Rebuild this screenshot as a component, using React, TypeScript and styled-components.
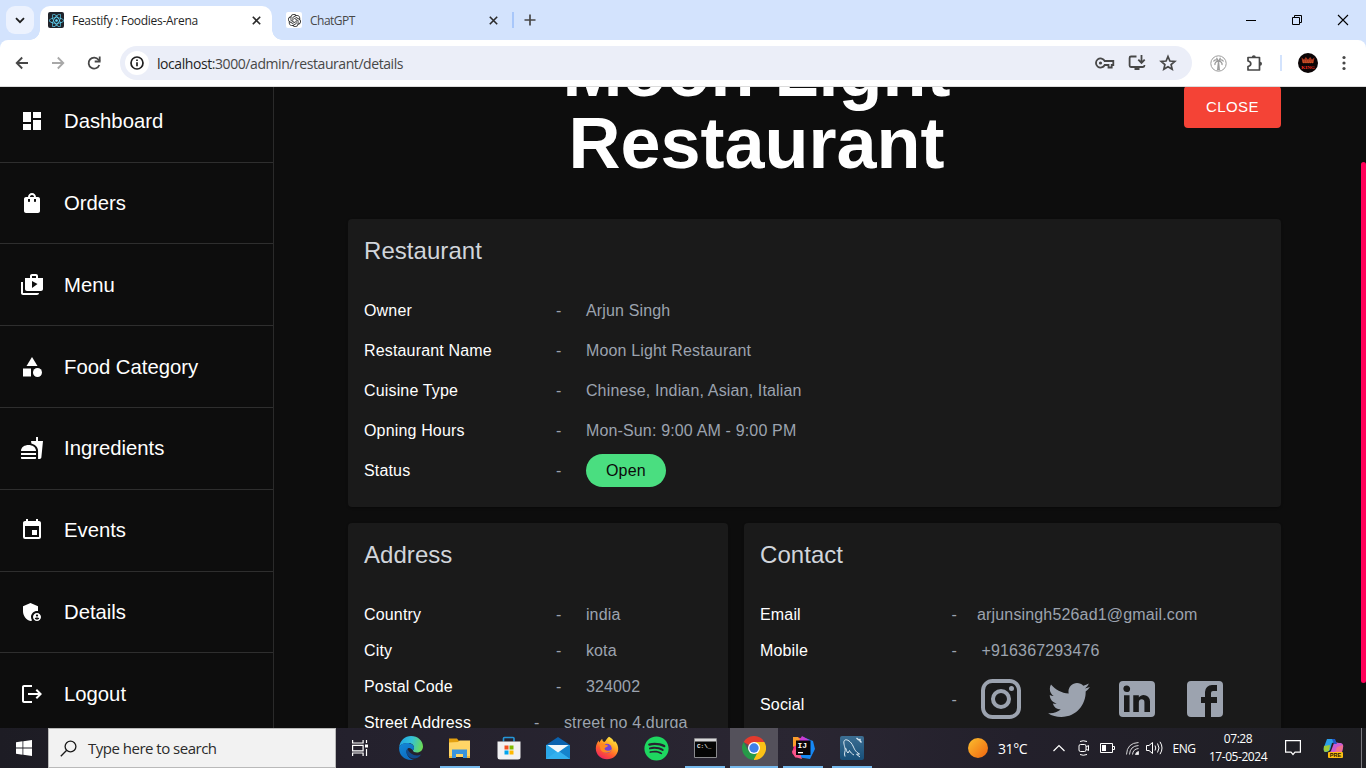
import React from "react";
import styled, { createGlobalStyle } from "styled-components";
import {
  MdAdminPanelSettings,
  MdCategory,
  MdDashboard,
  MdEvent,
  MdFastfood,
  MdLogout,
  MdShoppingBag,
  MdShopTwo,
} from "react-icons/md";
import { SiOpenai } from "react-icons/si";
import { FaReact, FaSpotify } from "react-icons/fa";

const GlobalStyle = createGlobalStyle`
  * { box-sizing: border-box; }
  body { margin: 0; overflow: hidden; background: #0d0d0d; }
  h1, h2, p { margin: 0; font-weight: 400; }
  svg { display: block; flex: none; }
`;

const uiFont = `"Open Sans", "Noto Sans", sans-serif`;
const pageFont = `"Liberation Sans", Arial, sans-serif`;

const Screen = styled.div`
  width: 1366px;
  height: 768px;
  display: flex;
  flex-direction: column;
  overflow: hidden;
`;

/* ---------- Browser ---------- */

const TabStrip = styled.div`
  flex: none;
  height: 40px;
  background: #d3e3fd;
  display: flex;
  font-family: ${uiFont};
`;

const TabSearch = styled.div`
  width: 28px;
  height: 28px;
  margin: 6px 6px 0;
  border-radius: 9px;
  background: #ecf2fe;
  display: flex;
  align-items: center;
  justify-content: center;
`;

const Tab = styled.div<{ $active?: boolean }>`
  position: relative;
  width: ${(p) => (p.$active ? 232 : 240)}px;
  height: 34px;
  margin-top: 6px;
  padding: 0 ${(p) => (p.$active ? 11 : 14)}px 6px ${(p) => (p.$active ? 8 : 14)}px;
  display: flex;
  align-items: center;
  gap: 8px;
  border-radius: 10px 10px 0 0;
  background: ${(p) => (p.$active ? "#fff" : "transparent")};
  font-size: 12px;
  color: ${(p) => (p.$active ? "#1f1f1f" : "#474747")};

  &::before,
  &::after {
    content: "";
    display: ${(p) => (p.$active ? "block" : "none")};
    position: absolute;
    bottom: 0;
    width: 10px;
    height: 10px;
  }
  &::before {
    left: -10px;
    background: radial-gradient(circle at 0 0, transparent 9.5px, #fff 10px);
  }
  &::after {
    right: -10px;
    background: radial-gradient(circle at 100% 0, transparent 9.5px, #fff 10px);
  }
`;

const TabTitle = styled.span<{ $spacing: number }>`
  flex: 1;
  white-space: nowrap;
  letter-spacing: ${(p) => p.$spacing}px;
`;

const Favicon = styled.span<{ $bg: string; $fg: string }>`
  width: 16px;
  height: 16px;
  border-radius: 2px;
  display: flex;
  align-items: center;
  justify-content: center;
  background: ${(p) => p.$bg};
  color: ${(p) => p.$fg};
`;

const StripDivider = styled.div`
  width: 2px;
  height: 16px;
  margin: 12px 10px 0 0;
  background: #a8c7fa;
`;

const NewTab = styled.div`
  padding-top: 14px;
  flex: 1;
`;

const WindowControls = styled.div`
  display: flex;
  height: 40px;
  align-items: center;
  svg {
    margin: 0 17px;
  }
`;

const Toolbar = styled.div`
  flex: none;
  height: 47px;
  border-bottom: 1px solid #dcdcdc;
  background: linear-gradient(#d3e3fd, #d3e3fd) top / 100% 10px no-repeat;
`;

const ToolbarInner = styled.div`
  height: 46px;
  padding: 0 13px 0 14px;
  border-radius: 8px 8px 0 0;
  background: #fff;
  display: flex;
  align-items: center;
  color: #474747;
`;

const NavButton = styled.span<{ $dim?: boolean }>`
  width: 36px;
  color: ${(p) => (p.$dim ? "#a8a8a8" : "#474747")};
`;

const Omnibox = styled.div`
  width: 1072px;
  height: 34px;
  padding: 0 15px 0 5px;
  margin: 0 17.500px 0 -2px;
  border-radius: 17px;
  background: #ebeef8;
  display: flex;
  align-items: center;
  gap: 8px;
`;

const SiteInfo = styled.span`
  width: 24px;
  height: 24px;
  border-radius: 50%;
  background: #fff;
  color: #1f1f1f;
  display: flex;
  align-items: center;
  justify-content: center;
`;

const Url = styled.span`
  flex: 1;
  font: 14px ${uiFont};
  letter-spacing: -0.43px;
  color: #474747;
  white-space: nowrap;
  b {
    font-weight: 400;
    color: #1f1f1f;
  }
`;

const OmniActions = styled.span`
  display: flex;
  align-items: center;
  gap: 13px;
`;

const Extension = styled.span`
  margin-left: 19px;
`;

const ToolbarDivider = styled.span`
  width: 2px;
  height: 16px;
  margin: 0 16px 0 17px;
  background: #d3e3fd;
`;

const MoreMenu = styled.span`
  margin-left: 24px;
`;

/* ---------- Page ---------- */

const Page = styled.div`
  flex: 1;
  min-height: 0;
  display: flex;
  overflow: hidden;
  background: #0d0d0d;
  color: #fff;
  font-family: ${pageFont};
`;

const Sidebar = styled.nav`
  width: 274px;
  flex: none;
  border-right: 1px solid #2a2a2a;
  overflow: hidden;
`;

const Menu = styled.div`
  margin-top: -6.2px;
`;

const MenuItem = styled.div`
  height: 81.8px;
  padding-left: 20px;
  border-bottom: 1px solid #2e2e2e;
  display: flex;
  align-items: center;
  gap: 20px;
  font-size: 20.3px;
`;

const MenuText = styled.span`
  padding-top: 0.9px;
`;

const Content = styled.main`
  flex: 1;
  overflow: hidden;
  padding: 0 80px 0 74px;
`;

const Header = styled.header`
  display: flex;
  align-items: flex-start;
  margin-bottom: 40px;
`;

const Title = styled.h1`
  flex: 1;
  margin-top: -52px;
  padding-right: 19px;
  text-align: center;
  font-size: 72px;
  font-weight: 700;
  line-height: 72px;
`;

const CloseButton = styled.button`
  width: 97px;
  height: 42px;
  margin-top: -1px;
  padding: 0 0 2px;
  border: 0;
  border-radius: 4px;
  background: #f44336;
  color: #fff;
  font: 15px ${pageFont};
  letter-spacing: 0.4px;
`;

const Cards = styled.div`
  display: grid;
  grid-template-columns: 380px 537px;
  gap: 16px;
`;

const Card = styled.section<{ $wide?: boolean }>`
  grid-column: ${(p) => (p.$wide ? "1 / -1" : "auto")};
  height: 288px;
  padding: 16px 16px 0;
  border-radius: 4px;
  background: #1a1a1a;
  box-shadow: 0 2px 1px -1px rgba(0, 0, 0, 0.2), 0 1px 3px rgba(0, 0, 0, 0.12);
`;

const CardTitle = styled.h2`
  margin-bottom: 32px;
  font-size: 24px;
  line-height: 32px;
  letter-spacing: 0.05px;
  color: #d1d5db;
`;

const Rows = styled.div<{ $gap: number }>`
  display: flex;
  flex-direction: column;
  gap: ${(p) => p.$gap}px;
`;

const Row = styled.div<{ $tall?: boolean }>`
  height: ${(p) => (p.$tall ? 60 : 24)}px;
  display: flex;
  align-items: ${(p) => (p.$tall ? "flex-start" : "center")};
  font-size: 16px;
  line-height: 24px;
  letter-spacing: 0.16px;
  color: #9ca3af;
`;

const Label = styled.p<{ $width?: number; $tall?: boolean }>`
  width: ${(p) => p.$width ?? 192}px;
  flex: none;
  line-height: ${(p) => (p.$tall ? 60 : 24)}px;
  color: #fff;
`;

const Dash = styled.span<{ $gap?: number; $tall?: boolean }>`
  flex: none;
  line-height: ${(p) => (p.$tall ? 50 : 24)}px;
  margin-right: ${(p) => p.$gap ?? 24.4}px;
`;

const Value = styled.span`
  white-space: nowrap;
`;

const Chip = styled.span`
  height: 33px;
  width: 80px;
  margin-top: -1px;
  border-radius: 17px;
  background: #4ade80;
  color: #0a0a0a;
  line-height: 33px;
  text-align: center;
`;

const Socials = styled.div`
  display: flex;
  gap: 20px;
  margin-left: -4.5px;
`;

const ScrollTrack = styled.div`
  width: 5px;
  padding-top: 75px;
`;

const ScrollThumb = styled.div`
  height: 521px;
  border-radius: 3px;
  background: #ff0059;
`;

/* ---------- Taskbar ---------- */

const Taskbar = styled.footer`
  flex: none;
  height: 40px;
  display: flex;
  background: linear-gradient(90deg, #1d1c24 0, #24212d 350px, #2a2632 800px, #23202b 1020px, #1f1f24 1366px);
  font-family: ${uiFont};
  color: #fff;
`;

const StartButton = styled.div`
  width: 48px;
  display: flex;
  align-items: center;
  justify-content: center;
`;

const SearchBox = styled.div`
  width: 288px;
  border: 1px solid #b9b9b9;
  background: #f2f2f2;
  display: flex;
  align-items: center;
  padding-left: 11px;
  gap: 11px;
  font-size: 15px;
  letter-spacing: -0.5px;
  color: #2b2b2b;
`;

const Apps = styled.div`
  display: flex;
  gap: 1px;
  flex: 1;
`;

const TaskButton = styled.div<{ $running?: boolean; $focused?: boolean; $first?: boolean }>`
  width: 48px;
  height: 40px;
  margin-right: ${(p) => (p.$first ? 2 : 0)}px;
  display: flex;
  align-items: center;
  justify-content: center;
  background-color: ${(p) => (p.$focused ? "#54515b" : "transparent")};
  background-image: ${(p) => (p.$running ? "linear-gradient(#76b9ed, #76b9ed)" : "none")};
  background-size: ${(p) => (p.$focused ? 48 : 40)}px 2px;
  background-position: bottom center;
  background-repeat: no-repeat;
`;

const Tray = styled.div`
  width: 398px;
  display: flex;
  align-items: center;
  font-size: 12px;
`;

const TraySlot = styled.div<{ $w: number }>`
  width: ${(p) => p.$w}px;
  flex: none;
  display: flex;
  align-items: center;
  justify-content: center;
  white-space: nowrap;
`;

const Sun = styled.span`
  width: 20px;
  height: 20px;
  flex: none;
  border-radius: 50%;
  background: linear-gradient(135deg, #fbbf2f, #f0640f);
`;

const Temperature = styled.span`
  width: 56px;
  flex: none;
  padding-left: 10px;
  font-size: 14px;
  letter-spacing: -0.4px;
`;

const Lang = styled(TraySlot)`
  letter-spacing: -0.5px;
`;

const Clock = styled.div`
  width: 74px;
  flex: none;
  text-align: center;
  line-height: 18px;
  letter-spacing: -0.45px;
`;

const DesktopEdge = styled.div`
  width: 1px;
  flex: none;
  height: 40px;
  margin-left: 6px;
  background: #7b7a80;
`;

const CloseX = () => (
  <svg width="9" height="9" viewBox="0 0 9 9" stroke="#2b2b2b" strokeWidth="1.6">
    <path d="M.8.8l7.4 7.4M8.2.8L.8 8.2" />
  </svg>
);

const menu = [
  ["Dashboard", MdDashboard],
  ["Orders", MdShoppingBag],
  ["Menu", MdShopTwo],
  ["Food Category", MdCategory],
  ["Ingredients", MdFastfood],
  ["Events", MdEvent],
  ["Details", MdAdminPanelSettings],
  ["Logout", MdLogout],
] as const;

const restaurant = [
  ["Owner", "Arjun Singh"],
  ["Restaurant Name", "Moon Light Restaurant"],
  ["Cuisine Type", "Chinese, Indian, Asian, Italian"],
  ["Opning Hours", "Mon-Sun: 9:00 AM - 9:00 PM"],
];

const socialPaths = [
  "M7.8 2h8.4C19.4 2 22 4.6 22 7.8v8.4a5.8 5.8 0 0 1-5.8 5.8H7.8C4.6 22 2 19.4 2 16.2V7.8A5.8 5.8 0 0 1 7.8 2m-.2 2A3.6 3.6 0 0 0 4 7.6v8.8C4 18.39 5.61 20 7.6 20h8.8a3.6 3.6 0 0 0 3.6-3.6V7.6C20 5.61 18.39 4 16.4 4H7.6m9.65 1.5a1.25 1.25 0 0 1 1.25 1.25A1.25 1.25 0 0 1 17.25 8 1.25 1.25 0 0 1 16 6.75a1.25 1.25 0 0 1 1.25-1.25M12 7a5 5 0 0 1 5 5 5 5 0 0 1-5 5 5 5 0 0 1-5-5 5 5 0 0 1 5-5m0 2a3 3 0 0 0-3 3 3 3 0 0 0 3 3 3 3 0 0 0 3-3 3 3 0 0 0-3-3z",
  "M22.46 6c-.77.35-1.6.58-2.46.69.88-.53 1.56-1.37 1.88-2.38-.83.5-1.75.85-2.72 1.05C18.37 4.5 17.26 4 16 4c-2.35 0-4.27 1.92-4.27 4.29 0 .34.04.67.11.98C8.28 9.09 5.11 7.38 3 4.79c-.37.63-.58 1.37-.58 2.15 0 1.49.75 2.81 1.91 3.56-.71 0-1.37-.2-1.95-.5v.03c0 2.08 1.48 3.82 3.44 4.21a4.22 4.22 0 0 1-1.93.07 4.28 4.28 0 0 0 4 2.98 8.521 8.521 0 0 1-5.33 1.84c-.34 0-.68-.02-1.02-.06C3.44 20.29 5.7 21 8.12 21 16 21 20.33 14.46 20.33 8.79c0-.19 0-.37-.01-.56.84-.6 1.56-1.36 2.14-2.23z",
  "M19 3a2 2 0 0 1 2 2v14a2 2 0 0 1-2 2H5a2 2 0 0 1-2-2V5a2 2 0 0 1 2-2h14m-.5 15.5v-5.3a3.26 3.26 0 0 0-3.26-3.26c-.85 0-1.84.52-2.32 1.3v-1.11h-2.79v8.37h2.79v-4.93c0-.77.62-1.4 1.39-1.4a1.4 1.4 0 0 1 1.4 1.4v4.93h2.79M6.88 8.56a1.68 1.68 0 0 0 1.68-1.68c0-.93-.75-1.69-1.68-1.69a1.69 1.69 0 0 0-1.69 1.69c0 .93.76 1.68 1.69 1.68m1.39 9.94v-8.37H5.5v8.37h2.77z",
  "M5 3h14a2 2 0 0 1 2 2v14a2 2 0 0 1-2 2H5a2 2 0 0 1-2-2V5a2 2 0 0 1 2-2m13 2h-2.5A3.5 3.5 0 0 0 12 8.5V11h-2v3h2v7h3v-7h3v-3h-3V9a1 1 0 0 1 1-1h2V5z",
];

function Browser() {
  return (
    <>
      <TabStrip>
        <TabSearch>
          <svg width="10" height="7" viewBox="0 0 10 7" fill="none" stroke="#1f1f1f" strokeWidth="1.8">
            <path d="M1 1.2l4 4 4-4" />
          </svg>
        </TabSearch>
        <Tab $active>
          <Favicon $bg="#20232a" $fg="#61dafb">
            <FaReact size={15} />
          </Favicon>
          <TabTitle $spacing={-0.28}>Feastify : Foodies-Arena</TabTitle>
          <CloseX />
        </Tab>
        <Tab>
          <Favicon $bg="#fff" $fg="#2b2b2b">
            <SiOpenai size={13} />
          </Favicon>
          <TabTitle $spacing={-0.5}>ChatGPT</TabTitle>
          <CloseX />
        </Tab>
        <StripDivider />
        <NewTab>
          <svg width="12" height="12" viewBox="0 0 12 12" stroke="#474747" strokeWidth="1.7">
            <path d="M6 .5v11M.5 6h11" />
          </svg>
        </NewTab>
        <WindowControls>
          <svg width="12" height="12" viewBox="0 0 12 12" stroke="#000">
            <path d="M1 6.5h10" />
          </svg>
          <svg width="12" height="12" viewBox="0 0 12 12" fill="none" stroke="#000">
            <path d="M1.5 3.5h7v7h-7zM3.5 3.5v-2h7v7h-2" />
          </svg>
          <svg width="12" height="12" viewBox="0 0 12 12" stroke="#000" strokeWidth="1.1">
            <path d="M1 1l10 10M11 1L1 11" />
          </svg>
        </WindowControls>
      </TabStrip>
      <Toolbar>
        <ToolbarInner>
          <NavButton>
            <svg width="16" height="16" viewBox="0 0 16 16" fill="none" stroke="currentColor" strokeWidth="1.8">
              <path d="M14 8H3M8.2 2.5L2.7 8l5.5 5.5" />
            </svg>
          </NavButton>
          <NavButton $dim>
            <svg width="16" height="16" viewBox="0 0 16 16" fill="none" stroke="currentColor" strokeWidth="1.8">
              <path d="M2 8h11M7.800 2.500L13.300 8l-5.500 5.500" />
            </svg>
          </NavButton>
          <NavButton>
            <svg width="16" height="16" viewBox="0 0 16 16" fill="none" stroke="currentColor" strokeWidth="1.8">
              <path d="M13.300 10A5.500 5.500 0 1 1 12.500 4.700L13.800 6.200" />
              <path d="M13.700 1.500v5h-5" />
            </svg>
          </NavButton>
          <Omnibox>
            <SiteInfo>
              <svg width="14" height="14" viewBox="0 0 14 14" fill="none" stroke="currentColor" strokeWidth="1.7">
                <circle cx="7" cy="7" r="6" />
                <path d="M7 6.200v4M7 3.600v1.500" />
              </svg>
            </SiteInfo>
            <Url><b>localhost</b>:3000/admin/restaurant/details</Url>
            <OmniActions>
              <svg width="20" height="12" viewBox="0 0 20 12" fill="none" stroke="currentColor" strokeWidth="1.8">
                <path d="M9.700 4A4.600 4.600 0 1 0 9.700 8H13.500v2.500h3.200V8H18.300V4z" />
                <circle cx="5.500" cy="6" r="1.600" fill="currentColor" stroke="none" />
              </svg>
              <svg width="18" height="16" viewBox="0 0 18 16" fill="none" stroke="currentColor" strokeWidth="1.800">
                <path d="M8.500 1.500H3Q1.600 1.500 1.600 3v7.500Q1.600 12 3 12h12q1.400 0 1.400-1.500V10" />
                <path d="M13.500 0v7.500M10.300 4.700l3.200 3.200 3.200-3.200" />
                <path d="M6.500 12h5v3h-5z" fill="currentColor" stroke="none" />
              </svg>
              <svg width="18" height="18" viewBox="0 0 18 18" fill="none" stroke="currentColor" strokeWidth="1.700">
                <path d="M9 2.500l1.900 4.500 4.900.4-3.700 3.200 1.100 4.700L9 12.800l-4.200 2.500 1.100-4.700-3.700-3.200 4.900-.4z" />
              </svg>
            </OmniActions>
          </Omnibox>
          <svg width="17" height="17" viewBox="0 0 17 17" fill="none" stroke="#9b9b9b" strokeWidth="1">
            <circle cx="8.500" cy="8.500" r="7.700" />
            <path d="M8.500 6.500l-.8 8h1.600zM8.500 6.500C7 4 4.500 4.500 3.500 6.500M8.500 6.500C10 4 12.500 4.500 13.500 6.500M8.500 6.500C6 6 4.500 8 5 10M8.500 6.500C11 6 12.500 8 12 10M8.500 6.500L6.500 2.800M8.500 6.500l2-3.700" strokeWidth="1.300" />
          </svg>
          <Extension>
            <svg width="17" height="17" viewBox="0 0 17 17" fill="none" stroke="currentColor" strokeWidth="1.700">
              <path d="M2 2.500H13.500V15H2V11.500Q4.800 11 4.800 8.800T2 6z" strokeLinejoin="round" />
              <path d="M5.800 2.200a2 2 0 0 1 4 0zM14 6.800a2 2 0 0 1 0 4z" fill="currentColor" stroke="none" />
            </svg>
          </Extension>
          <ToolbarDivider />
          <svg width="20" height="20" viewBox="0 0 20 20">
            <circle cx="10" cy="10" r="10" fill="#0b0506" />
            <path d="M3.500 4.500l2.500 2 1.800-2.500L10 6.500 12.200 4 14 6.500l2.500-2-1 5.500h-11z" fill="#a5351e" />
            <path d="M4.500 8h11M5 9.700h10" stroke="#e06a31" strokeWidth=".8" strokeDasharray="1.500 .7" />
            <text x="10" y="16.300" fontSize="5" fontWeight="700" textAnchor="middle" fill="#ef2b1d" fontFamily="Liberation Serif, serif">KING</text>
          </svg>
          <MoreMenu>
            <svg width="4" height="16" viewBox="0 0 4 16" fill="#474747">
              <circle cx="2" cy="2.500" r="1.600" />
              <circle cx="2" cy="8" r="1.600" />
              <circle cx="2" cy="13.500" r="1.600" />
            </svg>
          </MoreMenu>
        </ToolbarInner>
      </Toolbar>
    </>
  );
}

function DetailRow({ label, value, width, gap }: { label: string; value: React.ReactNode; width?: number; gap?: number }) {
  return (
    <Row>
      <Label $width={width}>{label}</Label>
      <Dash $gap={gap}>-</Dash>
      <Value>{value}</Value>
    </Row>
  );
}

function RestaurantPage() {
  return (
    <Page>
      <Sidebar>
        <Menu>
          {menu.map(([name, Icon]) => (
            <MenuItem key={name}>
              <Icon size={24} />
              <MenuText>{name}</MenuText>
            </MenuItem>
          ))}
        </Menu>
      </Sidebar>
      <Content>
        <Header>
          <Title>
            Moon Light
            <br />
            Restaurant
          </Title>
          <CloseButton>CLOSE</CloseButton>
        </Header>
        <Cards>
          <Card $wide>
            <CardTitle>Restaurant</CardTitle>
            <Rows $gap={16}>
              {restaurant.map(([label, value]) => (
                <DetailRow key={label} label={label} value={value} />
              ))}
              <Row>
                <Label>Status</Label>
                <Dash>-</Dash>
                <Chip>Open</Chip>
              </Row>
            </Rows>
          </Card>
          <Card>
            <CardTitle>Address</CardTitle>
            <Rows $gap={12}>
              <DetailRow label="Country" value="india" />
              <DetailRow label="City" value="kota" />
              <DetailRow label="Postal Code" value="324002" />
              <DetailRow label="Street Address" value="street no 4,durga" width={170} />
            </Rows>
          </Card>
          <Card>
            <CardTitle>Contact</CardTitle>
            <Rows $gap={12}>
              <DetailRow label="Email" value="arjunsingh526ad1@gmail.com" width={191.5} gap={20} />
              <DetailRow label="Mobile" value="+916367293476" width={191.5} />
              <Row $tall>
                <Label $width={191.5} $tall>Social</Label>
                <Dash $tall>-</Dash>
                <Socials>
                  {socialPaths.map((d) => (
                    <svg key={d} width="48" height="48" viewBox="0 0 24 24" fill="#9ca3af">
                      <path d={d} />
                    </svg>
                  ))}
                </Socials>
              </Row>
            </Rows>
          </Card>
        </Cards>
      </Content>
      <ScrollTrack>
        <ScrollThumb />
      </ScrollTrack>
    </Page>
  );
}

function EdgeIcon() {
  return (
    <svg width="24" height="24" viewBox="0 0 24 24">
      <defs>
        <linearGradient id="edgeTop" x1="0" y1=".3" x2="1" y2=".5">
          <stop offset="0" stopColor="#1fa5e4" />
          <stop offset=".5" stopColor="#35c1d6" />
          <stop offset="1" stopColor="#6bdb55" />
        </linearGradient>
        <linearGradient id="edgeBody" x1="0" y1="0" x2=".6" y2="1">
          <stop offset="0" stopColor="#1389d8" />
          <stop offset="1" stopColor="#0d6cc0" />
        </linearGradient>
      </defs>
      <path d="M.2 11C1 4.500 6 0 12 0c7 0 12 5 12 10.500 0 3.700-2.800 6-6 6-2.500 0-4-1-4-2 0-.7 1-1.200 1-3C15 9 12.500 7 9 7 5 7 1.500 8.500.2 11z" fill="url(#edgeTop)" />
      <path d="M.2 11C1.500 8.500 4.500 7 8 7c4.500 0 7 2.500 7 4.500 0 1.800-1 2.300-1 3-2-3-5-3.500-6-1C6.500 17 9 23 15 23.600 6 25.500-.8 19 .2 11z" fill="url(#edgeBody)" />
      <path d="M8.300 12.500C5.500 17 9.500 22.500 15 22.500c3 0 5.500-1.500 7-4-5.500 2.500-11.500-.5-13.700-6z" fill="#114a8b" />
    </svg>
  );
}

function TaskbarApps() {
  return (
    <Apps>
      <TaskButton $first>
        <svg width="17" height="16" viewBox="0 0 17 16" fill="none" stroke="#fff" strokeWidth="1.200">
          <path d="M.6 0v3h10.500V0M.6 5.300h10.500v5.500H.6zM.6 16v-3h10.500v3M14.500 0v3M14.500 9v7" />
          <path d="M13 4.500h3v3h-3z" fill="#fff" stroke="none" />
        </svg>
      </TaskButton>
      <TaskButton><EdgeIcon /></TaskButton>
      <TaskButton $running>
        <svg width="24" height="22" viewBox="0 0 24 22">
          <path d="M1 1.500h8l2 2.500v5H1z" fill="#e3a00f" />
          <path d="M1 5.500L10 5l1.500-1.500H22V20H1z" fill="#ffd566" />
          <path d="M4 21v-8.500h15V21h-4v-4H8v4z" fill="#3a94dc" />
          <path d="M1 19h3v2H1zM19 19h3v2h-3z" fill="#f0b83a" />
        </svg>
      </TaskButton>
      <TaskButton>
        <svg width="24" height="24" viewBox="0 0 24 24">
          <path d="M6.500 5.500V2.500q0-1 1-1h8.500q1 0 1 1v3" fill="none" stroke="#2596d8" strokeWidth="1.600" />
          <path d="M.5 5.500h23V21q0 2.500-2.500 2.500H3Q.5 23.500.5 21z" fill="#f1f1f3" />
          <path d="M7.500 9.500h4v4h-4z" fill="#f25022" />
          <path d="M12.500 9.500h4v4h-4z" fill="#7fba00" />
          <path d="M7.500 14.500h4v4h-4z" fill="#00a4ef" />
          <path d="M12.500 14.500h4v4h-4z" fill="#ffb900" />
        </svg>
      </TaskButton>
      <TaskButton>
        <svg width="24" height="24" viewBox="0 0 24 24">
          <path d="M0 9L12 1l12 8z" fill="#0b62ae" />
          <path d="M0 9h24v14H0z" fill="#2ba7e8" />
          <path d="M24 9v14L12 15z" fill="#1583cc" />
          <path d="M0 23l12-8.500L24 23z" fill="#33b0ee" />
          <path d="M1.500 9h21L12 16.500z" fill="#f3f7fa" />
        </svg>
      </TaskButton>
      <TaskButton>
        <svg width="24" height="24" viewBox="0 0 24 24">
          <defs>
            <linearGradient id="fox" x1=".8" y1="0" x2=".2" y2="1">
              <stop offset="0" stopColor="#fff04a" />
              <stop offset=".35" stopColor="#ffab24" />
              <stop offset=".65" stopColor="#ff5b2e" />
              <stop offset="1" stopColor="#ed1c68" />
            </linearGradient>
          </defs>
          <path d="M14 .8c3 1.500 4.500 3.500 5 5.500.7-.4.8-1 .8-1.600 2.200 2.500 3.700 5.500 3.400 8.800C22.800 19 18 23.300 12 23.300S.8 18.800.8 12.500c0-3.500 1.300-6 3-8 0 1 .2 1.600.7 2 .5-1.600 1.500-2.800 2.800-3.500 0 1.500.7 2.500 2 3C11.500 5 11.200 2.500 14 .8z" fill="url(#fox)" />
          <circle cx="12" cy="12.500" r="4.700" fill="#7542d6" />
          <path d="M4.500 8.500c2-1.500 4.500-1 6 .2l2.500.8c0 1.500-2.500 1.200-3.500 3 .5 2.500 4.500 3 7 1-1 4-8.500 4.700-11 0z" fill="#ff8a20" />
        </svg>
      </TaskButton>
      <TaskButton><FaSpotify size={25} color="#1ed760" /></TaskButton>
      <TaskButton $running>
        <svg width="23" height="20" viewBox="0 0 23 20">
          <path d="M.5.5h22v19H.5z" fill="#050505" stroke="#8a8a8e" />
          <path d="M1 1h21v2.500H1z" fill="#d8d8da" />
          <text x="3" y="9.500" fontSize="6" fontWeight="700" fill="#ececec" fontFamily="Liberation Mono, monospace">C:\_</text>
        </svg>
      </TaskButton>
      <TaskButton $running $focused>
        <svg width="24" height="24" viewBox="0 0 24 24">
          <path d="M12 12L1.600 6A12 12 0 0 1 22.400 6z" fill="#e33b2e" />
          <path d="M12 12V6h10.400A12 12 0 0 1 12 24z" fill="#fbc116" />
          <path d="M12 24l5.200-9L12 12v6z" fill="#fbc116" />
          <path d="M1.600 6l5.200 9L12 18l3.300-1L11.500 24A12 12 0 0 1 1.600 6z" fill="#269a48" />
          <circle cx="12" cy="12" r="6" fill="#fff" />
          <circle cx="12" cy="12" r="4.700" fill="#3f7fe8" />
        </svg>
      </TaskButton>
      <TaskButton $running>
        <svg width="25" height="24" viewBox="0 0 25 24">
          <path d="M2 1l8 1 3 6-8 14-4-5 2-7z" fill="#fc3380" />
          <path d="M2 1l5 0 4 5-9 5z" fill="#fa9d2b" />
          <path d="M12 1l10 4 2 8-5 10-13-2-3-4 3-3 8-6z" fill="#1688f5" />
          <path d="M11 0l7 4-6 6-4-5z" fill="#c83bd4" />
          <path d="M1 15l6-3 4 11-7-2z" fill="#f9578a" />
          <path d="M5 4.500h14.500v14.500H5z" fill="#0b0508" />
          <path d="M7 16h5v1.300H7z" fill="#fff" />
          <text x="6.500" y="12" fontSize="8" fontWeight="700" fill="#fff" fontFamily="Liberation Mono, monospace">IJ</text>
        </svg>
      </TaskButton>
      <TaskButton $running>
        <svg width="24" height="24" viewBox="0 0 24 24">
          <defs>
            <linearGradient id="sql" x1="0" y1="0" x2="0" y2="1">
              <stop offset="0" stopColor="#3c6e92" />
              <stop offset="1" stopColor="#174f78" />
            </linearGradient>
          </defs>
          <rect width="24" height="24" rx="2" fill="url(#sql)" />
          <path d="M5 20.500c-1.500-4 1-5 0-8.500S3 5 5 4s6 1.500 8 6c1.500 3 2 5.500 6.500 8l-3 .3 3.500 2.700M5.500 12c1 1 1 4 2.500 5l1.500-2.500c1 2 2.500 3.500 4.500 4.500" fill="none" stroke="#dbe9f2" strokeWidth="1" />
          <path d="M16.500 2l2 1.800 1.500-.3v1.500l1.500 1.500" fill="none" stroke="#dbe9f2" strokeWidth="1.400" />
        </svg>
      </TaskButton>
    </Apps>
  );
}

function WindowsTaskbar() {
  return (
    <Taskbar>
      <StartButton>
        <svg width="16" height="16" viewBox="0 0 16 16" fill="#fff">
          <path d="M0 2.200L6.500 1.300v6.300H0zM7.300 1.200L16 0v7.600H7.300zM0 8.400h6.500v6.300L0 13.800zM7.300 8.400H16V16l-8.700-1.200z" />
        </svg>
      </StartButton>
      <SearchBox>
        <svg width="17" height="17" viewBox="0 0 17 17" fill="none" stroke="#1b1b1b" strokeWidth="1.300">
          <circle cx="10.500" cy="6.500" r="5.400" />
          <path d="M6.700 10.300L.8 16.200" />
        </svg>
        Type here to search
      </SearchBox>
      <TaskbarApps />
      <Tray>
        <Sun />
        <Temperature>31°C</Temperature>
        <TraySlot $w={30}>
          <svg width="12" height="8" viewBox="0 0 12 8" fill="none" stroke="#fff" strokeWidth="1.200">
            <path d="M.5 7L6 1.500 11.500 7" />
          </svg>
        </TraySlot>
        <TraySlot $w={19}>
          <svg width="12" height="16" viewBox="0 0 12 16" fill="none" stroke="#fff">
            <rect x="1" y="4.500" width="7" height="7" rx="1.500" />
            <path d="M8 7l2.500-1.500v5L8 9M2 1.500q3-1.500 7 0M2 14.500q3 1.500 7 0" />
          </svg>
        </TraySlot>
        <TraySlot $w={29}>
          <svg width="15" height="10" viewBox="0 0 15 10">
            <path d="M.5.5h12v9H.5zM13 3.500h1.500v3H13" fill="none" stroke="#fff" />
            <path d="M2 2h4v6H2z" fill="#fff" />
          </svg>
        </TraySlot>
        <TraySlot $w={20}>
          <svg width="13" height="13" viewBox="0 0 13 13" fill="none" stroke="#d8d8da">
            <path d="M.5 12.500Q1 1 12.500.5M3.500 12.500Q4 4 12.500 3.500M6.500 12.500Q7 7 12.500 6.500" />
            <path d="M9.500 12.500q.5-2.500 3-3v3z" fill="#fff" />
          </svg>
        </TraySlot>
        <TraySlot $w={25}>
          <svg width="17" height="14" viewBox="0 0 17 14" fill="none" stroke="#fff">
            <path d="M.5 4.500h2.500l3.500-3v11l-3.500-3H.5zM9 4.500q1.500 2.500 0 5M11.500 2.500q3 4.500 0 9M14 .8q4 6.200 0 12.400" />
          </svg>
        </TraySlot>
        <Lang $w={34}>ENG</Lang>
        <Clock>
          07:28
          <br />
          17-05-2024
        </Clock>
        <TraySlot $w={36}>
          <svg width="16" height="16" viewBox="0 0 16 16" fill="none" stroke="#fff" strokeWidth="1.200">
            <path d="M.6.6h14.800v11.500H10L8 14.500l-2-2.400H.6z" />
          </svg>
        </TraySlot>
        <TraySlot $w={44}>
          <svg width="21" height="20" viewBox="0 0 21 20">
            <path d="M4 1h7l2 3-4 1-2 7-3 2H2q-2-1-1-5z" fill="#2a9fe8" />
            <path d="M1 8l6-1-1 6-4 1q-2-1-1-6z" fill="#9ccb3a" />
            <path d="M8 13l3-8q3-1 5 0h2q3 1 2 5l-1 4H7z" fill="#ca5bd2" />
            <path d="M9 1h3l2 5h-3z" fill="#2156c8" />
            <path d="M14 9l6-2-1 7h-7z" fill="#f0718a" />
            <rect x="5" y="14" width="15" height="6" rx="1" fill="#fdbd12" />
            <text x="12.500" y="19" fontSize="5.500" fontWeight="700" textAnchor="middle" fill="#1b1300" fontFamily="Liberation Sans, sans-serif">PRE</text>
          </svg>
        </TraySlot>
        <DesktopEdge />
      </Tray>
    </Taskbar>
  );
}

export default function App() {
  return (
    <Screen>
      <GlobalStyle />
      <Browser />
      <RestaurantPage />
      <WindowsTaskbar />
    </Screen>
  );
}
